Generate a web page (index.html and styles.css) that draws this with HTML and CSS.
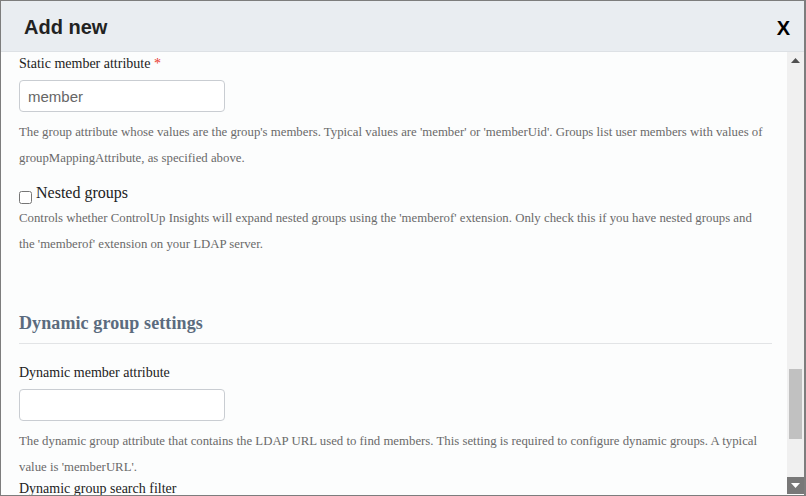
FILE: index.html
```
<!DOCTYPE html>
<html>
<head>
<meta charset="utf-8">
<link rel="stylesheet" href="styles.css">
</head>
<body>
<div class="window">
  <div class="header">
    <h1 class="title">Add new</h1>
    <span class="close">X</span>
  </div>
  <div class="body">
    <div class="content">
      <div class="label label-first">Static member attribute <span class="req">*</span></div>
      <input class="field" type="text" value="member">
      <p class="help">The group attribute whose values are the group's members. Typical values are 'member' or 'memberUid'. Groups list user members with values of groupMappingAttribute, as specified above.</p>
      <label class="check-row"><input class="check" type="checkbox"><span>Nested groups</span></label>
      <p class="help help-tight">Controls whether ControlUp Insights will expand nested groups using the 'memberof' extension. Only check this if you have nested groups and the 'memberof' extension on your LDAP server.</p>
      <h2 class="section">Dynamic group settings</h2>
      <div class="rule"></div>
      <div class="label label-second">Dynamic member attribute</div>
      <input class="field" type="text" value="">
      <p class="help">The dynamic group attribute that contains the LDAP URL used to find members. This setting is required to configure dynamic groups. A typical value is 'memberURL'.</p>
      <div class="label label-last">Dynamic group search filter</div>
    </div>
    <div class="scrollbar">
      <div class="sb-btn sb-up"><svg width="9" height="5" viewBox="0 0 9 5"><polygon points="0,5 9,5 4.5,0" fill="#505050"/></svg></div>
      <div class="sb-track">
        <div class="sb-space"></div>
        <div class="sb-thumb"></div>
      </div>
      <div class="sb-btn sb-down"><svg width="9" height="5" viewBox="0 0 9 5"><polygon points="0,0 9,0 4.5,5" fill="#ffffff"/></svg></div>
    </div>
  </div>
</div>
</body>
</html>
```
FILE: styles.css
```
html, body {
  margin: 0;
  padding: 0;
  background: #ffffff;
}
.window {
  width: 806px;
  height: 496px;
  box-sizing: border-box;
  border: 1px solid #7d7d7d;
  border-right-width: 2px;
  display: flex;
  flex-direction: column;
  background: #fcfdfd;
  overflow: hidden;
}
.header {
  box-sizing: border-box;
  height: 51px;
  flex: none;
  background: #e9edf1;
  border-bottom: 1px solid #dde1e5;
  display: flex;
  align-items: center;
  justify-content: space-between;
  padding: 0 14px 0 23px;
}
.title {
  margin: 0;
  font-family: "Liberation Sans", Arial, sans-serif;
  font-weight: bold;
  font-size: 20px;
  color: #222;
  line-height: 24px;
  padding-top: 2px;
}
.close {
  font-family: "Liberation Sans", Arial, sans-serif;
  font-weight: bold;
  font-size: 20px;
  color: #000;
  padding-top: 4px;
}
.body {
  height: 443px;
  flex: none;
  display: flex;
  overflow: hidden;
}
.content {
  flex: 1;
  min-width: 0;
  height: 443px;
  box-sizing: border-box;
  padding: 2px 15px 0 17px;
  overflow: hidden;
  font-family: "Liberation Serif", "Times New Roman", serif;
}
.label {
  font-family: "Liberation Serif", "Times New Roman", serif;
  font-size: 14px;
  line-height: 20px;
  color: #222;
}
.req {
  color: #e8372b;
}
.field {
  display: block;
  box-sizing: border-box;
  width: 206px;
  height: 32px;
  margin: 6px 0 0 1px;
  padding: 0 8px;
  border: 1px solid #c9cdd2;
  border-radius: 4px;
  background: #ffffff;
  font-family: "Liberation Sans", Arial, sans-serif;
  font-size: 15px;
  color: #666;
  outline: none;
}
.help {
  margin: 7px 5px 0 1px;
  font-family: "Liberation Serif", "Times New Roman", serif;
  font-size: 12.8px;
  line-height: 26px;
  color: #6a6a6a;
}
.check-row {
  display: flex;
  align-items: flex-start;
  margin-top: 12px;
  margin-left: 1px;
  font-family: "Liberation Serif", "Times New Roman", serif;
  font-size: 16px;
  line-height: 20px;
  color: #222;
}
.check {
  margin: 8px 4px 0 0;
  width: 13px;
  height: 13px;
}
.help-tight {
  margin-top: 1px;
}
.section {
  margin: 54px 0 0 1px;
  font-family: "Liberation Serif", "Times New Roman", serif;
  font-size: 18px;
  line-height: 24px;
  font-weight: bold;
  letter-spacing: 0.1px;
  color: #5b6b7e;
}
.rule {
  height: 1px;
  background: #e2e4e6;
  margin: 8px 0 0 1px;
}
.label-second {
  margin-top: 19px;
  margin-left: 1px;
}
.label-first {
  margin-left: 1px;
}
.label-last {
  margin-top: -1px;
  margin-left: 1px;
}
.scrollbar {
  width: 17px;
  flex: none;
  height: 442px;
  background: #f0f0f0;
  display: flex;
  flex-direction: column;
}
.sb-btn {
  height: 17px;
  flex: none;
  display: flex;
  align-items: center;
  justify-content: center;
}
.sb-up {
  background: #f0f0f0;
}
.sb-down {
  background: #787878;
}
.sb-track {
  height: 408px;
  flex: none;
  display: flex;
  flex-direction: column;
  align-items: center;
}
.sb-space {
  height: 300px;
  flex: none;
}
.sb-thumb {
  width: 13px;
  height: 70px;
  flex: none;
  background: #c1c1c1;
}
```
